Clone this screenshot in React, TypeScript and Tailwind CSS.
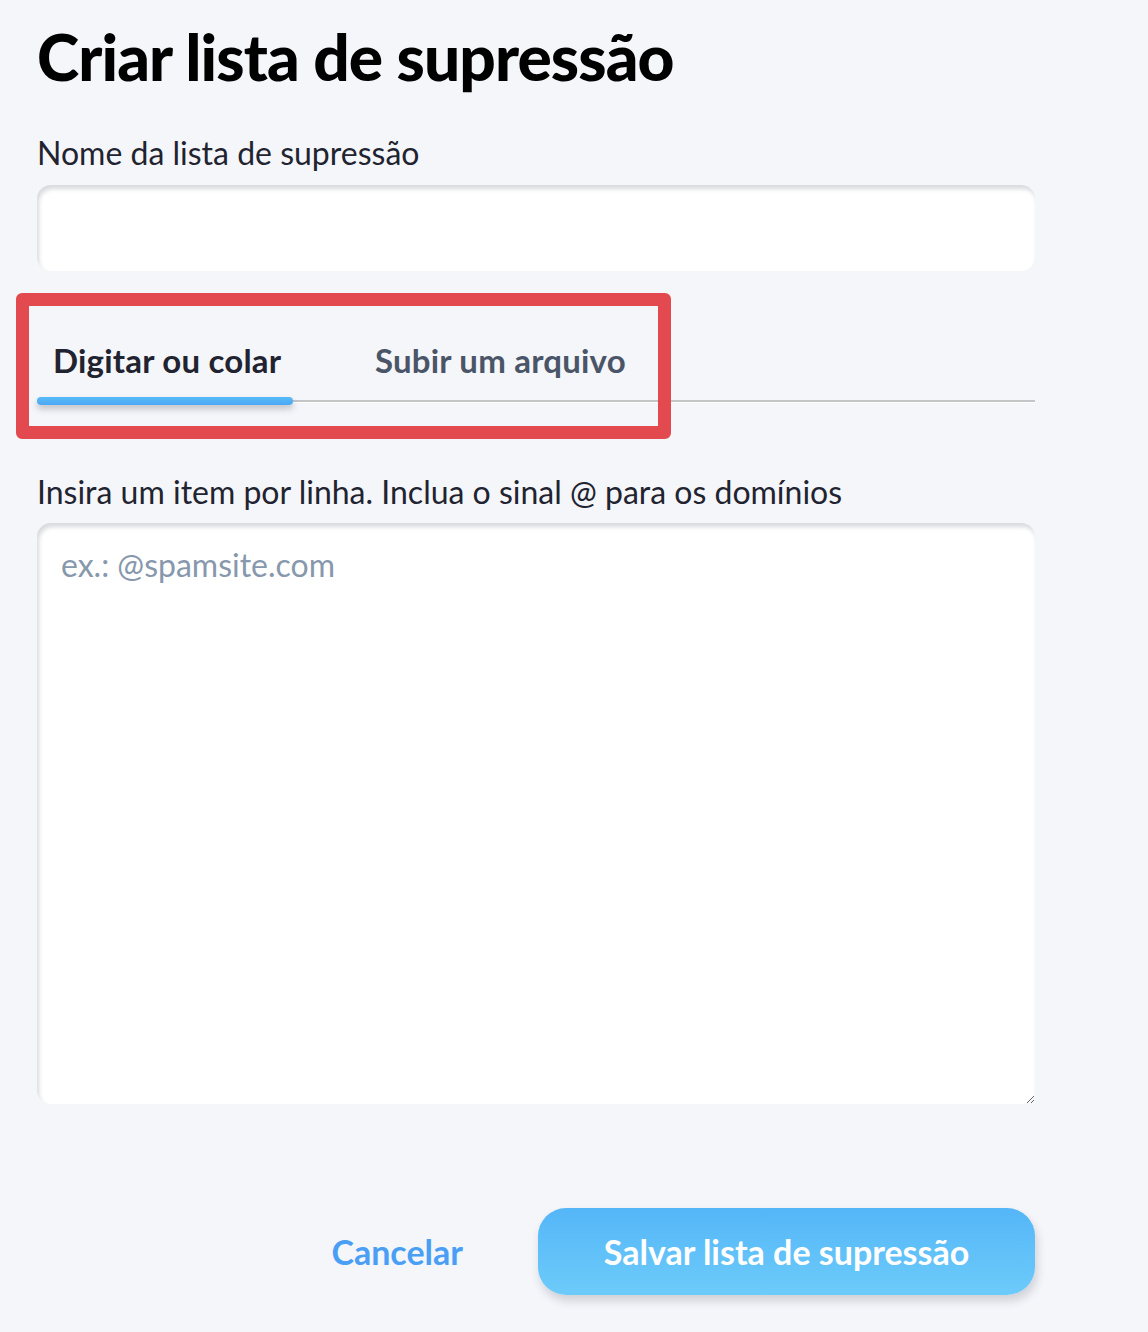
import { useState } from 'react';

type Tab = 'paste' | 'upload';

const font = { fontFamily: 'Lato, "Open Sans", sans-serif' };

export default function App() {
  const [tab, setTab] = useState<Tab>('paste');
  const [name, setName] = useState('');
  const [items, setItems] = useState('');

  return (
    <div className="min-h-[1332px] w-[1148px] bg-[#f5f6fa] pl-[37px] pt-[19px]" style={font}>
      <div className="w-[998px]">
        <h1 className="text-[64px] leading-[76px] font-black tracking-[-0.9px] text-black">
          Criar lista de supressão
        </h1>

        <label className="mt-[39px] block text-[32px] leading-[38px] text-[#1f2430]">
          Nome da lista de supressão
        </label>
        <input
          value={name}
          onChange={(e) => setName(e.target.value)}
          className="mt-[13px] block h-[86px] w-full rounded-[14px] bg-white px-6 text-[32px] shadow-[inset_2px_4px_4px_rgba(40,50,70,0.18)] outline-none"
        />

        <div className="relative mt-[65px]">
          <div className="relative flex h-[66px] items-start border-b-2 border-[#c3c4c8] shadow-[0_1px_0_#ffffff]">
            <button
              onClick={() => setTab('paste')}
              className={`h-[48px] w-[256px] pl-[16px] text-left text-[33px] font-bold tracking-[0.2px] ${
                tab === 'paste' ? 'text-[#1f2430]' : 'text-[#4a5568]'
              }`}
            >
              Digitar ou colar
            </button>
            <button
              onClick={() => setTab('upload')}
              className={`ml-[82px] h-[48px] text-left text-[33px] font-bold tracking-[0.2px] ${
                tab === 'upload' ? 'text-[#1f2430]' : 'text-[#4a5568]'
              }`}
            >
              Subir um arquivo
            </button>
            <span
              className={`absolute bottom-[-5px] h-[8px] rounded-full bg-gradient-to-b from-[#58baf9] to-[#4aa8f4] shadow-[0_4px_6px_rgba(30,40,60,0.25)] ${
                tab === 'paste' ? 'left-0 w-[256px]' : 'left-[338px] w-[270px]'
              }`}
            />
          </div>
          {/* annotation frame */}
          <div className="pointer-events-none absolute left-[-21px] top-[-43px] h-[146px] w-[655px] rounded-[6px] border-[13px] border-[#e34a4f]" />
        </div>

        <label className="mt-[71px] block text-[32px] leading-[38px] text-[#1f2430]">
          Insira um item por linha. Inclua o sinal @ para os domínios
        </label>
        <textarea
          value={items}
          onChange={(e) => setItems(e.target.value)}
          placeholder="ex.: @spamsite.com"
          className="mt-[12px] block h-[581px] w-full rounded-[14px] bg-white px-6 py-[22px] text-[32px] leading-[40px] text-[#1f2430] shadow-[inset_2px_4px_4px_rgba(40,50,70,0.18)] outline-none placeholder:text-[#8798ad]"
          style={font}
        />

        <div className="mt-[104px] flex items-center justify-end gap-[75px]">
          <button className="text-[34px] font-bold text-[#4a9ff5]">Cancelar</button>
          <button className="h-[87px] w-[497px] rounded-[28px] bg-gradient-to-b from-[#55b6f8] to-[#6ccbf9] text-[34px] font-bold text-white shadow-[2px_6px_10px_rgba(30,40,60,0.18)]">
            Salvar lista de supressão
          </button>
        </div>
      </div>
    </div>
  );
}
